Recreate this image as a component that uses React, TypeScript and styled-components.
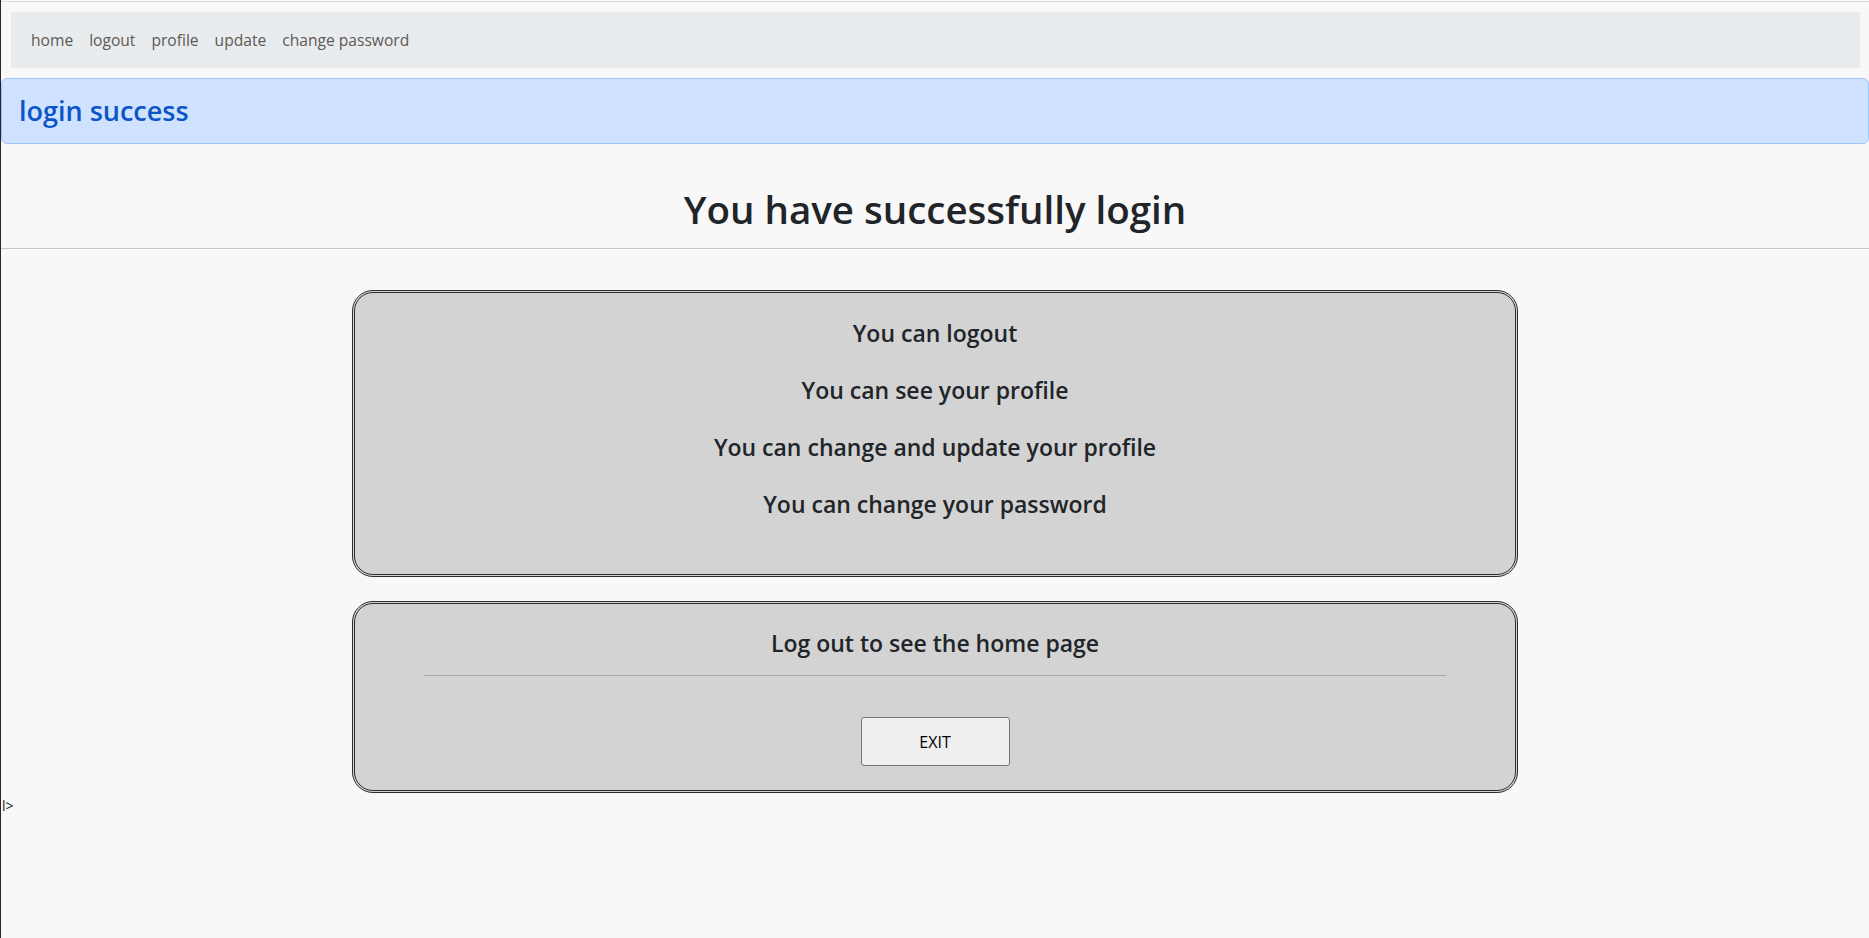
import React from 'react'
import styled, { createGlobalStyle } from 'styled-components'

const GlobalStyle = createGlobalStyle`
  html, body {
    margin: 0;
    padding: 0;
    background: #f8f8f8;
  }
  body {
    font-family: 'Open Sans', 'Noto Sans', sans-serif;
    color: #212529;
    min-height: 938px;
    border-left: 1px solid #2b2623;
    box-sizing: border-box;
  }
`;

const STopLine = styled.div`
  height: 1px;
  margin-top: 1px;
  background: #dadada;
`;

const SNav = styled.nav`
  display: flex;
  align-items: center;
  height: 56px;
  margin: 10px 9px 0 10px;
  padding: 0 12px;
  background: #e9ecef;
`;

const SNavLink = styled.a`
  padding: 0 8px;
  font-size: 15.6px;
  color: #5e5955;
  text-decoration: none;
  cursor: pointer;
`;

const SAlert = styled.div`
  margin-top: 10px;
  padding: 16px 17px;
  background: #cfe2ff;
  border: 1px solid #9ec5fe;
  border-radius: 6px;
`;

const SAlertTitle = styled.h3`
  margin: 0;
  font-size: 27px;
  line-height: 1.2;
  font-weight: 600;
  color: #0b55c9;
`;

const STitle = styled.h1`
  margin: 42px 0 15px;
  text-align: center;
  font-size: 38.5px;
  line-height: 1.2;
  font-weight: 600;
  color: #212529;
`;

const SRule = styled.hr`
  margin: 0;
  border: 0;
  border-top: 1px solid #c6c6c6;
`;

const SContent = styled.main`
  display: flex;
  flex-direction: column;
  align-items: center;
  gap: 24px;
  padding-top: 41px;
`;

const SCard = styled.section<{ $top: number; $bottom: number }>`
  width: 1166px;
  box-sizing: border-box;
  display: flex;
  flex-direction: column;
  align-items: center;
  padding: ${p => p.$top}px 0 ${p => p.$bottom}px;
  background: #d3d3d3;
  border: 3px double #2e2e2e;
  border-radius: 21px;
`;

const SList = styled.div`
  display: flex;
  flex-direction: column;
  align-items: center;
  gap: 28.5px;
`;

const SLine = styled.h4`
  margin: 0;
  font-size: 23px;
  line-height: 28.8px;
  font-weight: 600;
  color: #212529;
`;

const SDivider = styled.hr`
  width: 1022px;
  margin: 17px 0 41px;
  border: 0;
  border-top: 1px solid #a9a9a9;
`;

const SButton = styled.button`
  width: 149px;
  height: 49px;
  font-family: 'Open Sans', 'Noto Sans', sans-serif;
  font-size: 16px;
  color: #000;
  background: #efefef;
  border: 1px solid #767676;
  border-radius: 3px;
  cursor: pointer;
`;

const SStray = styled.div`
  margin-top: 3px;
  padding-left: 1px;
  font-size: 14px;
  color: #222;
`;

const features = [
  'You can logout',
  'You can see your profile',
  'You can change and update your profile',
  'You can change your password',
]

const links = ['home', 'logout', 'profile', 'update', 'change password']

const App: React.FC = () => {
  return (
    <>
      <GlobalStyle />
      <STopLine />
      <SNav>
        {links.map(l => (
          <SNavLink key={l}>{l}</SNavLink>
        ))}
      </SNav>
      <SAlert>
        <SAlertTitle>login success</SAlertTitle>
      </SAlert>
      <STitle>You have successfully login</STitle>
      <SRule />
      <SContent>
        <SCard $top={26} $bottom={55}>
          <SList>
            {features.map(f => (
              <SLine key={f}>{f}</SLine>
            ))}
          </SList>
        </SCard>
        <SCard $top={25} $bottom={24}>
          <SLine>Log out to see the home page</SLine>
          <SDivider />
          <SButton>EXIT</SButton>
        </SCard>
      </SContent>
      <SStray>l&gt;</SStray>
    </>
  )
}

export default App
